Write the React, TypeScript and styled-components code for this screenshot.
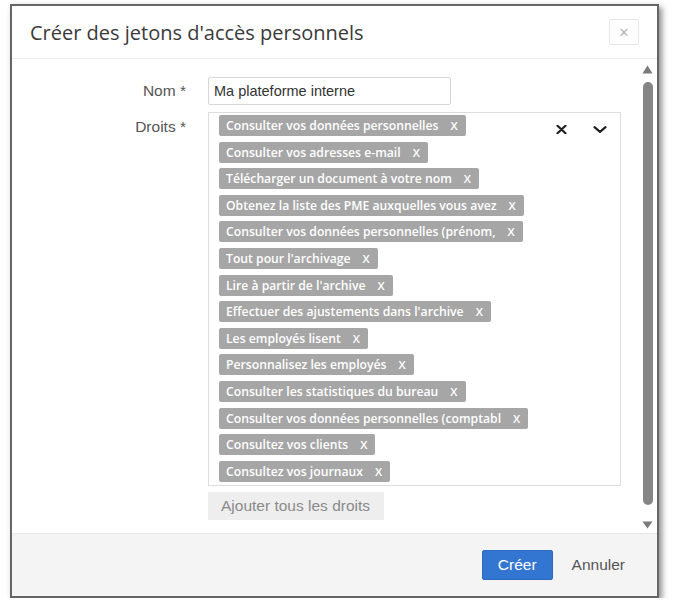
import React from "react";
import styled, { createGlobalStyle } from "styled-components";

const GlobalStyle = createGlobalStyle`
  html, body { margin: 0; padding: 0; background: #ffffff; }
  body { font-family: "Liberation Sans", Arial, sans-serif; }
  * { box-sizing: border-box; }
`;

const Modal = styled.div`
  margin: 4px 0 0 10px;
  width: 649px;
  height: 594px;
  border: 2px solid #666666;
  background: #ffffff;
  box-shadow: 3px 3px 6px rgba(0, 0, 0, 0.45);
  display: flex;
  flex-direction: column;
`;

const Header = styled.div`
  height: 53px;
  flex: none;
  display: flex;
  align-items: center;
  justify-content: space-between;
  padding: 0 18px 0 18px;
  border-bottom: 1px solid #ebebeb;
`;

const Title = styled.h1`
  margin: 0;
  font-family: "Open Sans", sans-serif;
  font-weight: 400;
  font-size: 20px;
  color: #3a3a3a;
`;

const CloseButton = styled.button`
  width: 30px;
  height: 26px;
  border: 1px solid #e6e6e6;
  border-radius: 3px;
  background: #ffffff;
  color: #b5b5b5;
  font-family: "DejaVu Sans", sans-serif;
  font-size: 13px;
  padding: 0;
  display: flex;
  align-items: center;
  justify-content: center;
`;

const Body = styled.div`
  height: 474px;
  flex: none;
  display: flex;
  overflow: hidden;
`;

const Content = styled.div`
  flex: 1;
  padding-top: 18px;
`;

const Form = styled.div`
  display: grid;
  grid-template-columns: 174px 413px;
  column-gap: 22px;
  row-gap: 7px;
  align-items: start;
`;

const Label = styled.label<{ $top?: number }>`
  text-align: right;
  font-size: 15.5px;
  color: #555555;
  line-height: ${(p) => (p.$top ? "20px" : "28px")};
  padding-top: ${(p) => p.$top ?? 0}px;
`;

const TextInput = styled.input`
  width: 243px;
  height: 28px;
  border: 1px solid #d6d6d6;
  border-radius: 2px;
  padding: 0 5px;
  font-family: "Liberation Sans", Arial, sans-serif;
  font-size: 14.5px;
  color: #333333;
  outline: none;
`;

const Select = styled.div`
  border: 1px solid #dddddd;
  padding: 2px 0 3px 10px;
  display: flex;
  justify-content: space-between;
  align-items: flex-start;
`;

const ChipList = styled.div`
  display: flex;
  flex-direction: column;
  align-items: flex-start;
  gap: 5.6px;
`;

const Chip = styled.div`
  height: 21px;
  display: inline-flex;
  align-items: center;
  gap: 12px;
  padding: 0 8px 0 7px;
  background: #a6a6a6;
  border-radius: 2px;
  color: #ffffff;
  font-family: "Open Sans", sans-serif;
  font-weight: 600;
  font-size: 12.2px;
`;

const ChipText = styled.span`
  white-space: nowrap;
`;

const ChipRemove = styled.span`
  font-size: 11.5px;
  font-weight: 600;
`;

const Controls = styled.div`
  display: flex;
  align-items: center;
  gap: 26px;
  padding: 10px 13px 0 0;
`;

const AddAll = styled.button`
  grid-column: 2;
  margin-top: -1px;
  justify-self: start;
  height: 28px;
  padding: 0 14px 0 13px;
  border: none;
  background: #eeeeee;
  color: #8a8a8a;
  font-family: "Liberation Sans", Arial, sans-serif;
  font-size: 15.5px;
`;

const ScrollBar = styled.div`
  width: 15px;
  margin-right: 2px;
  display: flex;
  flex-direction: column;
  align-items: center;
  padding: 6px 0 4px;
`;

const Thumb = styled.div`
  width: 10px;
  flex: 1;
  margin: 8px 0 16px;
  border-radius: 5px;
  background: #858585;
`;

const Footer = styled.div`
  flex: 1;
  border-top: 1px solid #e6e6e6;
  background: #f4f4f4;
  display: flex;
  justify-content: flex-end;
  align-items: center;
  gap: 7px;
  padding-right: 20px;
`;

const PrimaryButton = styled.button`
  height: 30px;
  padding: 0 15px;
  border: 1px solid #2c69bf;
  border-radius: 2px;
  background: #3376d1;
  color: #ffffff;
  font-family: "Liberation Sans", Arial, sans-serif;
  font-size: 15.5px;
`;

const LinkButton = styled.button`
  height: 30px;
  padding: 0 12px;
  border: none;
  background: transparent;
  color: #555555;
  font-family: "Liberation Sans", Arial, sans-serif;
  font-size: 15.5px;
`;

const rights = [
  "Consulter vos données personnelles",
  "Consulter vos adresses e-mail",
  "Télécharger un document à votre nom",
  "Obtenez la liste des PME auxquelles vous avez",
  "Consulter vos données personnelles (prénom,",
  "Tout pour l'archivage",
  "Lire à partir de l'archive",
  "Effectuer des ajustements dans l'archive",
  "Les employés lisent",
  "Personnalisez les employés",
  "Consulter les statistiques du bureau",
  "Consulter vos données personnelles (comptabl",
  "Consultez vos clients",
  "Consultez vos journaux",
];

export default function App() {
  return (
    <>
      <GlobalStyle />
      <Modal>
        <Header>
          <Title>Créer des jetons d'accès personnels</Title>
          <CloseButton aria-label="Fermer">✕</CloseButton>
        </Header>
        <Body>
          <Content>
            <Form>
              <Label>Nom *</Label>
              <TextInput defaultValue="Ma plateforme interne" />
              <Label $top={5}>Droits *</Label>
              <Select>
                <ChipList>
                  {rights.map((r) => (
                    <Chip key={r}>
                      <ChipText>{r}</ChipText>
                      <ChipRemove>X</ChipRemove>
                    </Chip>
                  ))}
                </ChipList>
                <Controls>
                  <svg width="11" height="9" viewBox="0 0 11 9">
                    <path d="M1.5 0.8 L9.5 8.2 M9.5 0.8 L1.5 8.2" stroke="#1f1f1f" strokeWidth="2.2" strokeLinecap="round" />
                  </svg>
                  <svg width="14" height="7" viewBox="0 0 14 7">
                    <path d="M1.5 1.2 L7 5.8 L12.5 1.2" fill="none" stroke="#1f1f1f" strokeWidth="2.2" strokeLinecap="round" strokeLinejoin="round" />
                  </svg>
                </Controls>
              </Select>
              <AddAll>Ajouter tous les droits</AddAll>
            </Form>
          </Content>
          <ScrollBar>
            <svg width="11" height="9" viewBox="0 0 11 9">
              <path d="M5.5 0.5 L10.5 8.5 L0.5 8.5 Z" fill="#7a7a7a" />
            </svg>
            <Thumb />
            <svg width="11" height="8" viewBox="0 0 11 8">
              <path d="M0.5 0.5 L10.5 0.5 L5.5 7.5 Z" fill="#7a7a7a" />
            </svg>
          </ScrollBar>
        </Body>
        <Footer>
          <PrimaryButton>Créer</PrimaryButton>
          <LinkButton>Annuler</LinkButton>
        </Footer>
      </Modal>
    </>
  );
}
